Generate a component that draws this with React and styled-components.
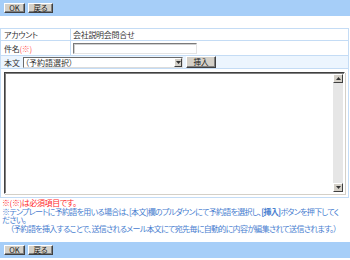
import React from "react";
import styled, { createGlobalStyle } from "styled-components";

const GlobalStyle = createGlobalStyle`
  html, body {
    margin: 0;
    padding: 0;
    background: #ffffff;
  }
  body {
    font-family: "Noto Sans CJK JP", "Noto Sans", sans-serif;
    font-size: 8px;
    font-feature-settings: "palt";
    color: #333333;
  }
  #root {
    width: 350px;
    height: 260px;
    overflow: hidden;
  }
`;

const Page = styled.div`
  display: flex;
  flex-direction: column;
  width: 350px;
  height: 260px;
`;

const Bar = styled.div`
  display: flex;
  align-items: center;
  gap: 3px;
  height: 16px;
  padding: 0 4px;
  margin-top: ${(p) => p.$top || 0}px;
  background: #a6cef8;
  flex-shrink: 0;
`;

const Button = styled.button`
  display: flex;
  align-items: center;
  justify-content: center;
  box-sizing: border-box;
  width: ${(p) => p.$w}px;
  height: ${(p) => p.$h || 10}px;
  padding: 0;
  margin: 0;
  font-family: inherit;
  font-size: 7.5px;
  font-feature-settings: "palt";
  line-height: 1;
  color: #222;
  background: #d4d0c8;
  border: 1px solid;
  border-color: #ffffff #404040 #404040 #ffffff;
  box-shadow: inset -1px -1px 0 #808080;
  cursor: pointer;
`;

const Form = styled.div`
  margin-top: 12px;
  width: 349px;
  box-sizing: border-box;
  border: 1px solid #c4dcf5;
  border-bottom: none;
`;

const Row = styled.div`
  display: grid;
  grid-template-columns: ${(p) => (p.$full ? "1fr" : "70px 1fr")};
  height: ${(p) => p.$h}px;
  box-sizing: border-box;
  border-bottom: 1px solid #c4dcf5;
  background: ${(p) => (p.$tint ? "#ecf5fe" : "#ffffff")};
`;

const Label = styled.div`
  display: flex;
  align-items: center;
  padding-left: 3px;
  border-right: 1px solid #c4dcf5;
  letter-spacing: -0.3px;
`;

const Value = styled.div`
  display: flex;
  align-items: center;
  padding-left: 2px;
  letter-spacing: -0.3px;
`;

const Mark = styled.span`
  color: #ff5a5a;
`;

const TextInput = styled.input`
  box-sizing: border-box;
  width: 124px;
  height: 11px;
  margin: 0;
  padding: 0 2px;
  font-family: inherit;
  font-size: 8px;
  border: 1px solid;
  border-color: #7a7a7a #e4e4e4 #e4e4e4 #7a7a7a;
  box-shadow: inset 1px 1px 0 #d0d0d0;
  background: #fff;
  outline: none;
`;

const BodyRow = styled.div`
  display: flex;
  align-items: center;
  gap: 3px;
  padding-left: 3px;
`;

const SelectBox = styled.div`
  display: flex;
  align-items: center;
  box-sizing: border-box;
  width: 160px;
  height: 11px;
  background: #fff;
  border: 1px solid;
  border-color: #6a6a6a #dcdcdc #dcdcdc #6a6a6a;
`;

const SelectText = styled.span`
  flex: 1;
  padding-left: 1px;
  line-height: 9px;
  white-space: nowrap;
  overflow: hidden;
`;

const ArrowBox = styled.span`
  display: flex;
  align-items: center;
  justify-content: center;
  width: 8px;
  height: 9px;
  box-sizing: border-box;
  background: #d4d0c8;
  border: 1px solid;
  border-color: #ffffff #404040 #404040 #ffffff;
`;

const EditorCell = styled.div`
  padding: 3px;
  height: 129px;
  box-sizing: border-box;
  border-bottom: 1px solid #c4dcf5;
`;

const Editor = styled.div`
  display: flex;
  height: 100%;
  box-sizing: border-box;
  border: 1px solid;
  border-color: #404040 #ffffff #ffffff #404040;
  box-shadow: inset 1px 1px 0 #808080, 1px 1px 0 #d4d0c8;
  background: #fff;
`;

const TextArea = styled.textarea`
  flex: 1;
  border: none;
  margin: 0;
  padding: 2px;
  resize: none;
  outline: none;
  font-family: inherit;
  font-size: 8px;
  background: transparent;
`;

const ScrollBar = styled.div`
  display: flex;
  flex-direction: column;
  width: 10px;
  padding: 1px 1px 1px 0;
`;

const ScrollButton = styled.div`
  display: flex;
  align-items: center;
  justify-content: center;
  height: 9px;
  box-sizing: border-box;
  background: #d4d0c8;
  border: 1px solid;
  border-color: #ffffff #404040 #404040 #ffffff;
`;

const Track = styled.div`
  flex: 1;
  background: #e6e6e6;
`;

const Notes = styled.div`
  margin-top: 1px;
  padding-left: 2px;
  line-height: 8.5px;
  white-space: nowrap;
`;

const Required = styled.div`
  color: #ff2a2a;
  letter-spacing: -0.4px;
`;

const Help = styled.div`
  color: #4a80d0;
  letter-spacing: -0.7px;
`;

const Strong = styled.b`
  font-weight: 700;
`;

const Indent = styled.span`
  padding-left: 8px;
`;

const Tri = ({ up }) => (
  <svg width="5" height="3" viewBox="0 0 5 3">
    <polygon points={up ? "2.5,0 5,3 0,3" : "0,0 5,0 2.5,3"} fill="#333" />
  </svg>
);

export default function App() {
  return (
    <>
      <GlobalStyle />
      <Page>
        <Bar>
          <Button $w={21}>OK</Button>
          <Button $w={25}>戻る</Button>
        </Bar>

        <Form>
          <Row $h={12}>
            <Label>アカウント</Label>
            <Value>会社説明会問合せ</Value>
          </Row>
          <Row $h={15}>
            <Label>
              件名<Mark>(※)</Mark>
            </Label>
            <Value>
              <TextInput type="text" />
            </Value>
          </Row>
          <Row $h={13} $full $tint>
            <BodyRow>
              <span>本文</span>
              <SelectBox>
                <SelectText>（予約語選択）</SelectText>
                <ArrowBox>
                  <Tri />
                </ArrowBox>
              </SelectBox>
              <Button $w={30} $h={12}>
                挿入
              </Button>
            </BodyRow>
          </Row>
          <EditorCell>
            <Editor>
              <TextArea />
              <ScrollBar>
                <ScrollButton>
                  <Tri up />
                </ScrollButton>
                <Track />
                <ScrollButton>
                  <Tri />
                </ScrollButton>
              </ScrollBar>
            </Editor>
          </EditorCell>
        </Form>

        <Notes>
          <Required>※(※)は必須項目です。</Required>
          <Help>
            ※テンプレートに予約語を用いる場合は、[本文]欄のプルダウンにて予約語を選択し、<Strong>[挿入]</Strong>ボタンを押下してく
            <br />
            ださい。
            <br />
            <Indent>（予約語を挿入することで、送信されるメール本文にて宛先毎に自動的に内容が編集されて送信されます。）</Indent>
          </Help>
        </Notes>

        <Bar $top={9}>
          <Button $w={21}>OK</Button>
          <Button $w={25}>戻る</Button>
        </Bar>
      </Page>
    </>
  );
}
